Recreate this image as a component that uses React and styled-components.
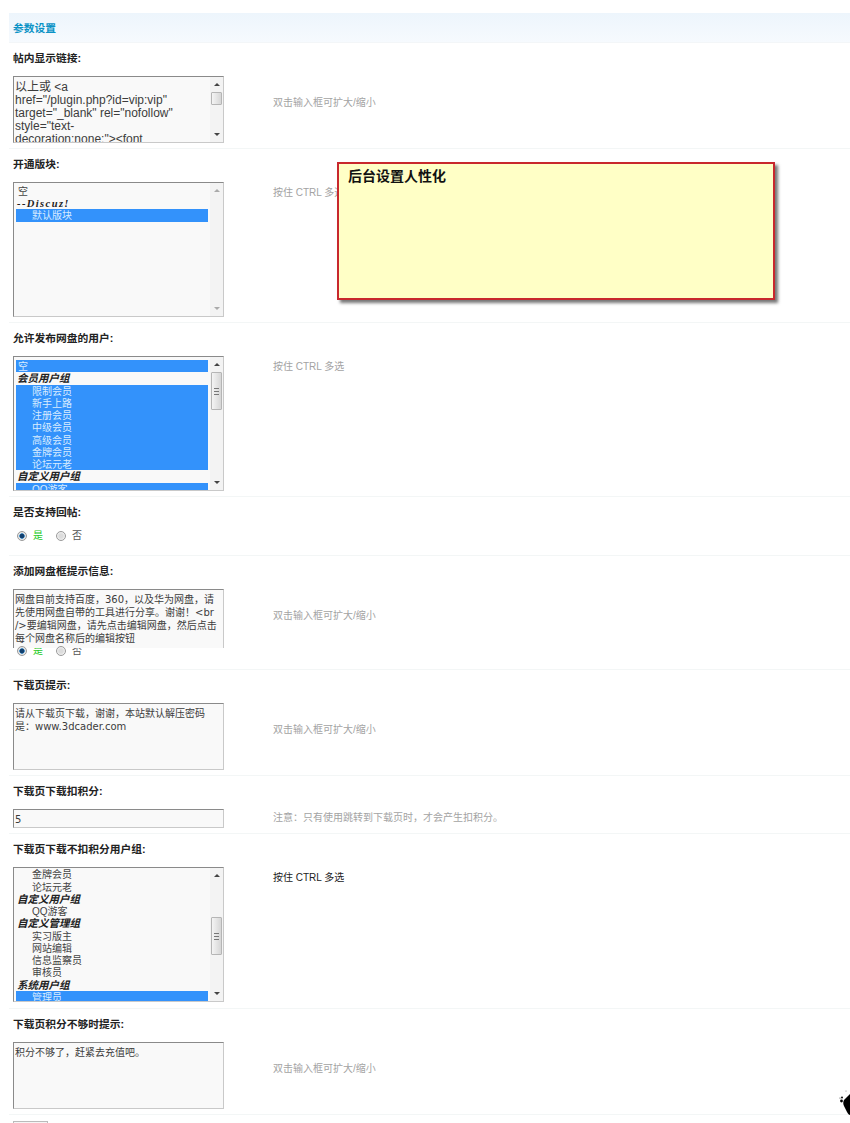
import styled, { createGlobalStyle } from "styled-components"

const GlobalStyle = createGlobalStyle`
  html, body {
    margin: 0;
    padding: 0;
    background: #fff;
    overflow: hidden;
  }
  body {
    font-family: "Liberation Sans", "Noto Sans CJK SC", sans-serif;
    color: #444;
  }
`

const boardOptions = [
  { text: "空" },
  { text: "--Discuz!", group: true, wide: true },
  { text: "默认版块", child: true, on: true },
]

const userOptions = [
  { text: "空", on: true },
  { text: "会员用户组", group: true },
  { text: "限制会员", child: true, on: true },
  { text: "新手上路", child: true, on: true },
  { text: "注册会员", child: true, on: true },
  { text: "中级会员", child: true, on: true },
  { text: "高级会员", child: true, on: true },
  { text: "金牌会员", child: true, on: true },
  { text: "论坛元老", child: true, on: true },
  { text: "自定义用户组", group: true },
  { text: "QQ游客", child: true, on: true },
]

const freeOptions = [
  { text: "金牌会员", child: true },
  { text: "论坛元老", child: true },
  { text: "自定义用户组", group: true },
  { text: "QQ游客", child: true },
  { text: "自定义管理组", group: true },
  { text: "实习版主", child: true },
  { text: "网站编辑", child: true },
  { text: "信息监察员", child: true },
  { text: "审核员", child: true },
  { text: "系统用户组", group: true },
  { text: "管理员", child: true, on: true },
]

const Scrollbar = ({ thumbTop, thumbHeight }) => (
  <Bar>
    <ArrowUp $off={!thumbHeight} />
    <Track>
      {thumbHeight ? (
        <Thumb $top={thumbTop} $height={thumbHeight}>
          {thumbHeight > 20 && <Grip />}
        </Thumb>
      ) : null}
    </Track>
    <ArrowDown $off={!thumbHeight} />
  </Bar>
)

const ListBox = ({ options, pad, thumbTop, thumbHeight }) => (
  <Box $height={135}>
    <Options $pad={pad}>
      {options.map((o, i) => (
        <Option key={i} $on={o.on} $child={o.child} $group={o.group} $wide={o.wide}>
          {o.text}
        </Option>
      ))}
    </Options>
    <Scrollbar thumbTop={thumbTop} thumbHeight={thumbHeight} />
  </Box>
)

const Radios = ({ overlap }) => (
  <RadioRow $overlap={overlap}>
    <Radio $on />
    <RadioText $on>是</RadioText>
    <Radio />
    <RadioText>否</RadioText>
  </RadioRow>
)

const App = () => {
  return (
    <Page>
      <GlobalStyle />
      <Heading>参数设置</Heading>

      <Row>
        <Label>帖内显示链接:</Label>
        <Content>
          <Box $height={67}>
            <Text $latin>
              以上或 &lt;a<br />
              href="/plugin.php?id=vip:vip"<br />
              target="_blank" rel="nofollow"<br />
              style="text-<br />
              decoration:none;"&gt;&lt;font
            </Text>
            <Scrollbar thumbTop={0} thumbHeight={13} />
          </Box>
          <Hint $top={20}>双击输入框可扩大/缩小</Hint>
        </Content>
      </Row>

      <Row>
        <Label>开通版块:</Label>
        <Content>
          <ListBox options={boardOptions} pad={2} />
          <Hint $top={4}>按住 CTRL 多选</Hint>
        </Content>
      </Row>

      <Row>
        <Label>允许发布网盘的用户:</Label>
        <Content>
          <ListBox options={userOptions} pad={3} thumbTop={0} thumbHeight={38} />
          <Hint $top={4}>按住 CTRL 多选</Hint>
        </Content>
      </Row>

      <Row>
        <Label>是否支持回帖:</Label>
        <Radios />
      </Row>

      <Row>
        <Label>添加网盘框提示信息:</Label>
        <Content>
          <Box $height={59} $open>
            <Text>
              网盘目前支持百度，360，以及华为网盘，请<br />
              先使用网盘自带的工具进行分享。谢谢！&lt;br<br />
              /&gt;要编辑网盘，请先点击编辑网盘，然后点击<br />
              每个网盘名称后的编辑按钮
            </Text>
          </Box>
          <Hint $top={20}>双击输入框可扩大/缩小</Hint>
        </Content>
        <Radios overlap />
      </Row>

      <Row>
        <Label>下载页提示:</Label>
        <Content>
          <Box $height={67}>
            <Text>
              请从下载页下载，谢谢，本站默认解压密码<br />
              是：www.3dcader.com
            </Text>
          </Box>
          <Hint $top={20}>双击输入框可扩大/缩小</Hint>
        </Content>
      </Row>

      <Row>
        <Label>下载页下载扣积分:</Label>
        <Content>
          <Box $height={18.67}>
            <Text>5</Text>
          </Box>
          <Hint $top={2}>注意：只有使用跳转到下载页时，才会产生扣积分。</Hint>
        </Content>
      </Row>

      <Row>
        <Label>下载页下载不扣积分用户组:</Label>
        <Content>
          <ListBox options={freeOptions} pad={0} thumbTop={34} thumbHeight={38} />
          <Hint $top={4} $dark>按住 CTRL 多选</Hint>
        </Content>
      </Row>

      <Row>
        <Label>下载页积分不够时提示:</Label>
        <Content>
          <Box $height={67}>
            <Text>积分不够了，赶紧去充值吧。</Text>
          </Box>
          <Hint $top={20}>双击输入框可扩大/缩小</Hint>
        </Content>
      </Row>

      <Submit />

      <Note>后台设置人性化</Note>

      <Blot viewBox="0 0 12 28">
        <path d="M12 6 C10 8 8 10 6 12 C5 14 5 16 6 18 C7 20 8 22 9 24 C10 26 11 27 12 27 Z" fill="#000" />
        <circle cx="4" cy="9.5" r="1" fill="#111" />
        <circle cx="3.5" cy="13" r="1.4" fill="#000" />
        <circle cx="2" cy="10" r="0.6" fill="#444" />
        <circle cx="8" cy="3" r="0.6" fill="#888" />
      </Blot>
    </Page>
  )
}

export default App

const Page = styled.div`
  position: relative;
  width: 850px;
  height: 1123px;
  overflow: hidden;
  padding-top: 13px;
  box-sizing: border-box;
`

const Heading = styled.div`
  margin-left: 9px;
  height: 28.5px;
  line-height: 31px;
  padding-left: 4px;
  font-size: 10.75px;
  font-weight: bold;
  color: #0c93c6;
  background: linear-gradient(to bottom, #edf5fc, #f6fafe);
  border-bottom: 1px solid #f3f6f8;
`

const Row = styled.div`
  margin-left: 9px;
  padding: 0 0 5.33px 4px;
  border-bottom: 1px solid #f3f6f6;
`

const Label = styled.div`
  height: 33px;
  line-height: 31px;
  font-size: 10.75px;
  font-weight: bold;
  color: #222;
`

const Content = styled.div`
  display: flex;
  align-items: flex-start;
  gap: 49px;
`

const Box = styled.div`
  position: relative;
  z-index: 1;
  display: flex;
  flex: none;
  width: 211px;
  height: ${(p) => p.$height}px;
  box-sizing: border-box;
  overflow: hidden;
  background: #f9f9f9;
  border: 1px solid #c9c9c9;
  border-top-color: #8a8a8a;
  border-left-color: #8a8a8a;
  ${(p) => p.$open && "border-bottom: none;"}
`

const Text = styled.div`
  flex: 1;
  min-width: 0;
  padding: ${(p) => (p.$latin ? "4px" : "3px")} 0 0 1px;
  font-family: ${(p) => (p.$latin ? '"Liberation Sans"' : '"DejaVu Sans"')}, "Noto Sans CJK SC", sans-serif;
  font-size: ${(p) => (p.$latin ? "12px" : "10px")};
  line-height: 13px;
  white-space: nowrap;
  color: #3c3c3c;
`

const Options = styled.div`
  flex: 1;
  min-width: 0;
  padding: ${(p) => p.$pad}px 2px 0 2px;
`

const Option = styled.div`
  height: 12.25px;
  line-height: 14px;
  padding-left: ${(p) => (p.$child ? "16px" : p.$group ? "1px" : "2px")};
  white-space: nowrap;
  font-family: ${(p) => (p.$group ? '"Liberation Serif"' : '"Liberation Sans"')}, "Noto Sans CJK SC", serif;
  font-size: ${(p) => (p.$group ? "10.5px" : "10px")};
  font-weight: ${(p) => (p.$group ? "bold" : "normal")};
  font-style: ${(p) => (p.$group ? "italic" : "normal")};
  letter-spacing: ${(p) => (p.$wide ? "1.4px" : "0")};
  color: ${(p) => (p.$on ? "#d8ecff" : p.$group ? "#222" : "#444")};
  background: ${(p) => (p.$on ? "#3392fb" : "transparent")};
`

const Bar = styled.div`
  display: flex;
  flex-direction: column;
  flex: none;
  width: 13px;
  background: #f3f3f3;
`

const ArrowUp = styled.div`
  flex: none;
  height: 15px;
  display: flex;
  align-items: center;
  justify-content: center;
  &::after {
    content: "";
    border: 3px solid transparent;
    border-top: none;
    border-bottom: 3px solid ${(p) => (p.$off ? "#aaa" : "#444")};
  }
`

const ArrowDown = styled.div`
  flex: none;
  height: 15px;
  display: flex;
  align-items: center;
  justify-content: center;
  &::after {
    content: "";
    border: 3px solid transparent;
    border-bottom: none;
    border-top: 3px solid ${(p) => (p.$off ? "#aaa" : "#444")};
  }
`

const Track = styled.div`
  flex: 1;
  min-height: 0;
`

const Thumb = styled.div`
  display: flex;
  align-items: center;
  justify-content: center;
  width: 11px;
  height: ${(p) => p.$height}px;
  margin: ${(p) => p.$top}px 0 0 1px;
  box-sizing: border-box;
  border: 1px solid #b5b5b5;
  border-radius: 1px;
  background: linear-gradient(to right, #f4f4f4, #d6d6d6);
`

const Grip = styled.div`
  width: 5px;
  height: 5px;
  border-top: 1px solid #777;
  border-bottom: 1px solid #777;
  background: linear-gradient(#777, #777) center / 100% 1px no-repeat;
`

const Hint = styled.div`
  margin-top: ${(p) => p.$top}px;
  font-size: 10px;
  line-height: 14px;
  white-space: nowrap;
  color: ${(p) => (p.$dark ? "#222" : "#a3a3a3")};
`

const RadioRow = styled.div`
  display: flex;
  align-items: center;
  height: 12px;
  margin: ${(p) => (p.$overlap ? "-3px" : "0")} 0 7px 4px;
`

const Radio = styled.span`
  position: relative;
  z-index: 2;
  flex: none;
  width: 10px;
  height: 10px;
  box-sizing: border-box;
  border-radius: 50%;
  border: 1px solid #9a9a9a;
  background: ${(p) =>
    p.$on
      ? "radial-gradient(circle, #12406e 0 2px, #3f8ac4 2.5px, #e6e6e6 3px)"
      : "radial-gradient(circle, #dcdcdc 0 2px, #f2f2f2 4px)"};
`

const RadioText = styled.span`
  width: 23px;
  margin-left: 6px;
  font-size: 10px;
  line-height: 12px;
  color: ${(p) => (p.$on ? "#22c922" : "#555")};
`

const Submit = styled.div`
  width: 35px;
  height: 20px;
  margin: 6px 0 0 13px;
  box-sizing: border-box;
  border: 1px solid #bbb;
  background: #f5f5f5;
`

const Note = styled.div`
  position: absolute;
  left: 337px;
  top: 162px;
  width: 438px;
  height: 138px;
  box-sizing: border-box;
  padding: 3px 9px;
  border: 2px solid #c8282d;
  background: #ffffc6;
  box-shadow: 3px 3px 3px #777;
  font-size: 14px;
  line-height: 18px;
  font-weight: bold;
  color: #111;
`

const Blot = styled.svg`
  position: absolute;
  right: 0;
  top: 1088px;
  width: 12px;
  height: 28px;
`
